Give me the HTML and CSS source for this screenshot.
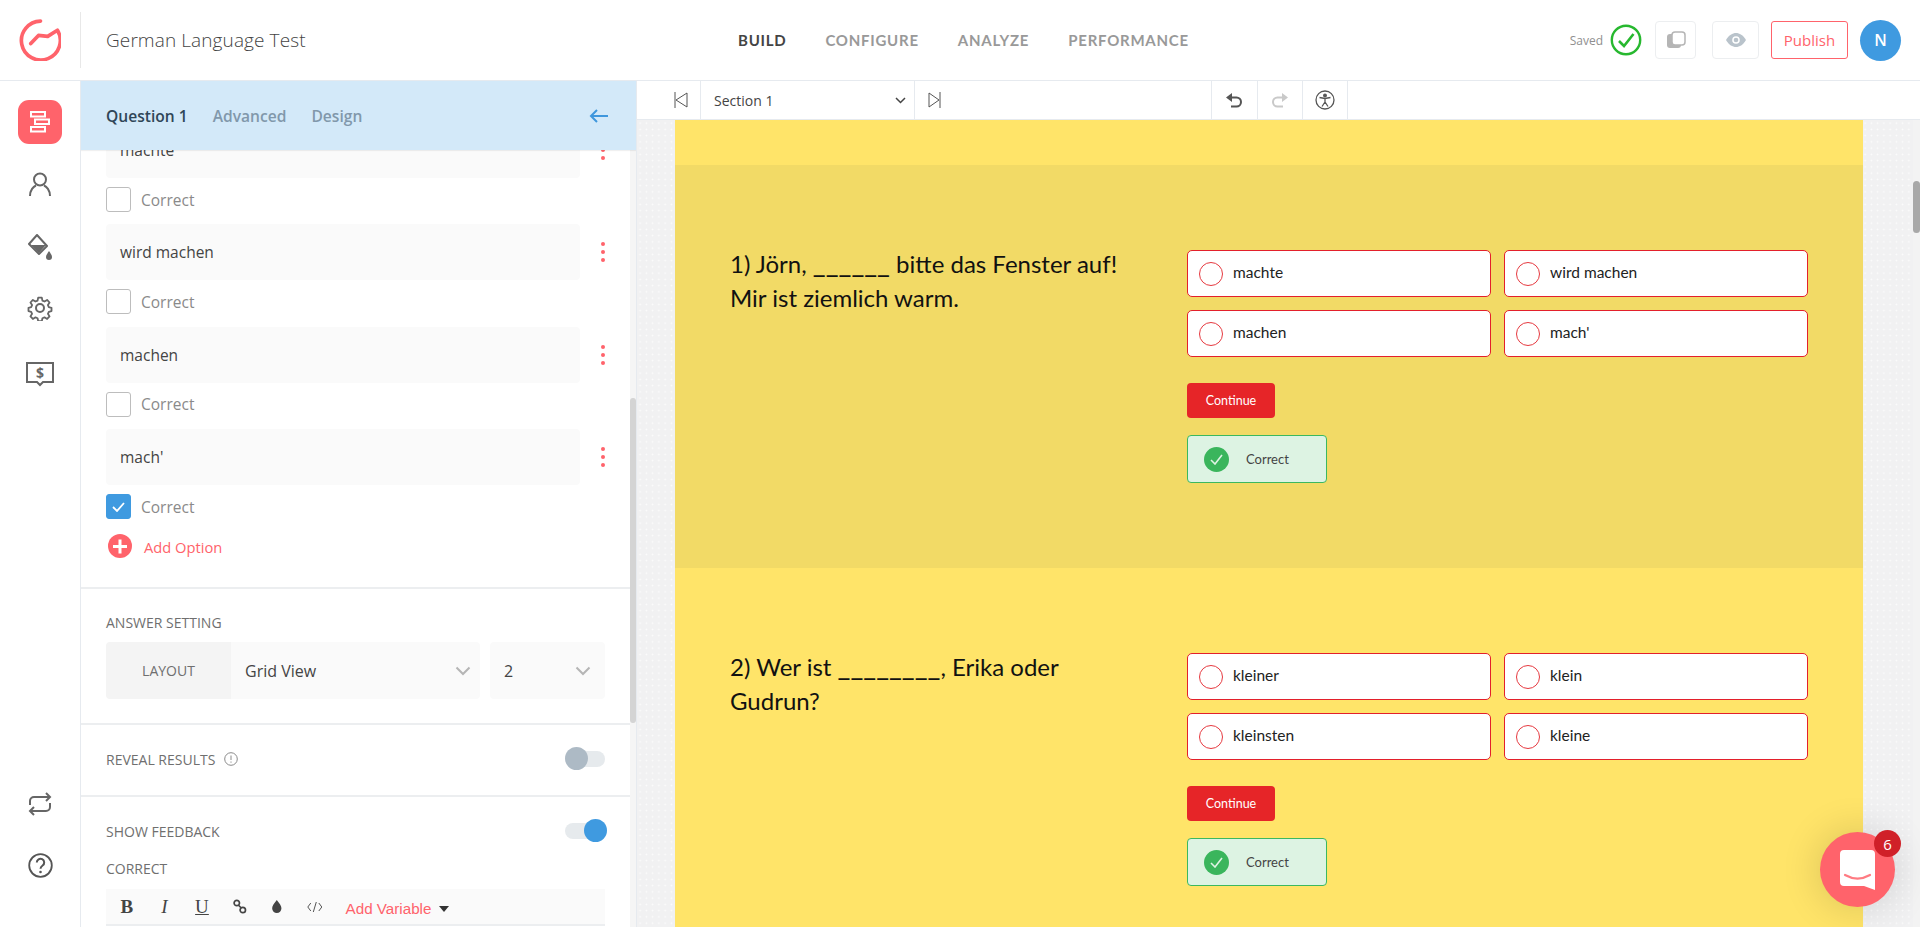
FILE: index.html
```html
<!DOCTYPE html>
<html lang="en">
<head>
<meta charset="utf-8">
<title>German Language Test</title>
<link rel="stylesheet" href="styles.css">
</head>
<body>
<header class="topbar">
  <div class="logo-cell">
    <svg class="logo" viewBox="0 0 41 41" fill="none" stroke="#ff636b" stroke-width="3.6" stroke-linecap="round" stroke-linejoin="round"><path d="M21 2A19 19 0 1 0 37.500 11L28 17 19 16 11.500 24"/></svg>
  </div>
  <div class="doc-title">German Language Test</div>
  <nav class="main-nav">
    <a class="nav-item active">BUILD</a>
    <a class="nav-item">CONFIGURE</a>
    <a class="nav-item">ANALYZE</a>
    <a class="nav-item">PERFORMANCE</a>
  </nav>
  <div class="top-actions">
    <span class="saved">Saved</span>
    <svg class="saved-check" viewBox="0 0 32 32" fill="none" stroke="#27b82f"><circle cx="16" cy="16" r="14.200" stroke-width="2.400"/><path d="M9 17l5 5L23.500 10" stroke-width="2.600"/></svg>
    <button class="icon-btn copy-btn"><svg width="20" height="18" viewBox="0 0 20 18"><rect x="1" y="3" width="14" height="14" rx="3" fill="#b5b5b5"/><rect x="6" y="1" width="13" height="13" rx="3" fill="#fff" stroke="#b5b5b5" stroke-width="1.500"/></svg></button>
    <button class="icon-btn eye-btn"><svg width="20" height="14" viewBox="0 0 20 14"><path d="M0 7C3 2 6.500 0 10 0s7 2 10 7c-3 5-6.500 7-10 7S3 12 0 7z" fill="#b9c3cb"/><circle cx="10" cy="7" r="3.800" fill="#fff"/><circle cx="10" cy="7" r="2.300" fill="#b9c3cb"/></svg></button>
    <button class="publish">Publish</button>
    <div class="avatar">N</div>
  </div>
</header>

<div class="workspace">
  <aside class="rail">
    <div class="rail-top">
      <div class="rail-active">
        <svg width="20" height="22" viewBox="0 0 20 22" fill="none" stroke="#fff" stroke-width="2"><rect x="1" y="1" width="14" height="4.500"/><rect x="5" y="8.500" width="14" height="4.500"/><rect x="1" y="16" width="14" height="4.500"/></svg>
      </div>
      <svg class="rail-icon person" width="22" height="24" viewBox="0 0 22 24" fill="none" stroke="#666" stroke-width="2"><circle cx="11" cy="7.500" r="6"/><path d="M1 24c0-6 3.500-9.500 6-10.500M21 24c0-6-3.500-9.500-6-10.500"/></svg>
      <svg class="rail-icon bucket" width="26" height="26" viewBox="0 0 26 26"><path d="M10 1l10 11-8 8-10-10z" fill="none" stroke="#666" stroke-width="2" stroke-linejoin="round"/><path d="M4 11h15l-7 8z" fill="#666"/><path d="M22 17c2 3 3 4.500 3 6a3 3 0 0 1-6 0c0-1.500 1-3 3-6z" fill="#666"/></svg>
      <svg class="rail-icon gear" width="26" height="26" viewBox="0 0 26 26" fill="none" stroke="#666" stroke-width="2" stroke-linejoin="round"><circle cx="13" cy="13" r="4"/><path d="M11 1.500h4l.7 3.300 2.300 1 2.900-1.800 2.700 2.900-1.800 2.800 1 2.300 3 .8v3.600l-3 .8-1 2.300 1.800 2.800-2.700 2.900-2.900-1.800-2.300 1-.7 3.300h-4l-.7-3.300-2.300-1-2.900 1.800-2.700-2.900 1.800-2.800-1-2.300-3-.8v-3.600l3-.8 1-2.300-1.800-2.800 2.700-2.900 2.900 1.800 2.300-1z" transform="translate(1.300 1.300) scale(.9)"/></svg>
      <div class="rail-dollar">
        <svg width="28" height="25" viewBox="0 0 28 25" fill="none" stroke="#666" stroke-width="2"><path d="M1 1h26v19H17l-3 3-3-3H1z"/></svg>
        <span class="dollar-sign">$</span>
      </div>
    </div>
    <div class="rail-bottom">
      <svg class="rail-icon" width="24" height="24" viewBox="0 0 24 24" fill="none" stroke="#666" stroke-width="2"><path d="M2 13V9a4 4 0 0 1 4-4h16M18 1l4 4-4 4M22 11v4a4 4 0 0 1-4 4H2M6 15l-4 4 4 4"/></svg>
      <svg class="rail-icon" width="25" height="25" viewBox="0 0 25 25" fill="none" stroke="#555" stroke-width="1.800"><circle cx="12.500" cy="12.500" r="11.300"/><path d="M8.800 9.500a3.700 3.700 0 1 1 5.800 3c-1.400 1-2.100 1.700-2.100 3.300" stroke-width="2"/><circle cx="12.500" cy="19" r="1.300" fill="#555" stroke="none"/></svg>
    </div>
  </aside>

  <section class="panel">
    <div class="panel-tabs">
      <span class="ptab current">Question 1</span>
      <span class="ptab">Advanced</span>
      <span class="ptab">Design</span>
      <svg class="back-arrow" width="19" height="14" viewBox="0 0 19 14" fill="none" stroke="#3f97dd" stroke-width="2"><path d="M19 7H2M8 1L2 7l6 6"/></svg>
    </div>
    <div class="panel-scroll">
      <div class="panel-content">
        <div class="block options-block">
          <div class="option-row"><div class="option-input">machte</div><span class="kebab"><i></i><i></i><i></i></span></div>
          <label class="check-row"><span class="check"></span>Correct</label>
          <div class="option-row"><div class="option-input">wird machen</div><span class="kebab"><i></i><i></i><i></i></span></div>
          <label class="check-row"><span class="check"></span>Correct</label>
          <div class="option-row"><div class="option-input">machen</div><span class="kebab"><i></i><i></i><i></i></span></div>
          <label class="check-row"><span class="check"></span>Correct</label>
          <div class="option-row"><div class="option-input">mach'</div><span class="kebab"><i></i><i></i><i></i></span></div>
          <label class="check-row"><span class="check on"><svg width="13" height="10" viewBox="0 0 13 10" fill="none" stroke="#fff" stroke-width="1.800"><path d="M1 5l4 4 7-8"/></svg></span>Correct</label>
          <div class="add-option"><span class="plus"></span><span class="add-text">Add Option</span></div>
        </div>
        <div class="block answer-block">
          <div class="caps">ANSWER SETTING</div>
          <div class="layout-row">
            <div class="layout-label">LAYOUT</div>
            <div class="layout-select"><span>Grid View</span><svg width="16" height="10" viewBox="0 0 16 10" fill="none" stroke="#b5b5b5" stroke-width="2"><path d="M1.500 1.500L8 8l6.500-6.500"/></svg></div>
            <div class="count-select"><span>2</span><svg width="16" height="10" viewBox="0 0 16 10" fill="none" stroke="#b5b5b5" stroke-width="2"><path d="M1.500 1.500L8 8l6.500-6.500"/></svg></div>
          </div>
        </div>
        <div class="block reveal-block">
          <div class="caps with-info">REVEAL RESULTS
            <svg width="14" height="14" viewBox="0 0 14 14" fill="none" stroke="#8a8a8a"><circle cx="7" cy="7" r="6.300"/><path d="M7 3.500v4.500M7 9.500v1.200"/></svg>
          </div>
          <span class="toggle"><span class="knob"></span></span>
        </div>
        <div class="block feedback-block">
          <div class="feedback-head">
            <div class="caps">SHOW FEEDBACK</div>
            <span class="toggle on"><span class="knob"></span></span>
          </div>
          <div class="caps correct-label">CORRECT</div>
          <div class="editor-bar">
            <span class="ed ed-b">B</span>
            <span class="ed ed-i">I</span>
            <span class="ed ed-u">U</span>
            <svg class="ed" width="14" height="15" viewBox="0 0 14 15" fill="none" stroke="#444" stroke-width="1.700"><circle cx="4" cy="4" r="2.700"/><circle cx="10" cy="11" r="2.700"/><path d="M5.500 6l3 3"/></svg>
            <svg class="ed" width="10" height="13" viewBox="0 0 10 14"><path d="M5 0c3 4 5 6 5 9a5 5 0 0 1-10 0c0-3 2-5 5-9z" fill="#444"/></svg>
            <svg class="ed" width="16" height="12" viewBox="0 0 16 12" fill="none" stroke="#555"><path d="M4 2L1 6l3 4M12 2l3 4-3 4M9.500 1L6.500 11"/></svg>
            <span class="add-variable">Add Variable</span><span class="caret"></span>
          </div>
        </div>
      </div>
      <div class="panel-scrollbar"><span class="panel-thumb"></span></div>
    </div>
  </section>

  <main class="stage">
    <div class="stage-tools">
      <span class="tool tool-prev"><svg width="14" height="16" viewBox="0 0 14 16" fill="none" stroke="#555"><path d="M1 0v16M13 1L2 8l11 7z"/></svg></span>
      <div class="section-select"><span>Section 1</span><svg width="11" height="7" viewBox="0 0 11 7" fill="none" stroke="#444" stroke-width="1.500"><path d="M1 1l4.500 4.500L10 1"/></svg></div>
      <span class="tool tool-next"><svg width="13" height="16" viewBox="0 0 13 16" fill="none" stroke="#555"><path d="M12 0v16M1 1l10 7-10 7z"/></svg></span>
      <span class="tool-spacer"></span>
      <span class="tool tool-square"><svg width="18" height="15" viewBox="0 0 18 15"><path d="M7 0v9L1 4.500z" fill="#555"/><path d="M6 4.500h5.500a4.500 4.500 0 0 1 0 9H6" fill="none" stroke="#555" stroke-width="2"/></svg></span>
      <span class="tool tool-square"><svg width="18" height="15" viewBox="0 0 18 15"><path d="M11 0v9l6-4.500z" fill="#c9c9c9"/><path d="M12 4.500H6.500a4.500 4.500 0 0 0 0 9H12" fill="none" stroke="#c9c9c9" stroke-width="2"/></svg></span>
      <span class="tool tool-square"><svg width="20" height="20" viewBox="0 0 20 20" fill="none" stroke="#555" stroke-width="1.300"><circle cx="10" cy="10" r="9"/><circle cx="10" cy="5.500" r="1.300" fill="#555"/><path d="M4.500 7.500L10 8.500l5.500-1M10 8.500v3.500M10 12l-3 4.500M10 12l3 4.500"/></svg></span>
    </div>
    <div class="stage-scroll">
      <div class="quiz">
        <div class="quiz-strip"></div>
        <article class="question active-q">
          <div class="q-text">1) Jörn, <span class="blank">______</span> bitte das Fenster auf! Mir ist ziemlich warm.</div>
          <div class="q-body">
            <div class="answers">
              <div class="answer"><span class="radio"></span>machte</div>
              <div class="answer"><span class="radio"></span>wird machen</div>
              <div class="answer"><span class="radio"></span>machen</div>
              <div class="answer"><span class="radio"></span>mach'</div>
            </div>
            <button class="continue">Continue</button>
            <div class="feedback"><span class="tick"><svg width="13" height="11" viewBox="0 0 13 11" fill="none" stroke="#dff3e4" stroke-width="1.600"><path d="M1 6l4 4 7-9"/></svg></span>Correct</div>
          </div>
        </article>
        <article class="question">
          <div class="q-text">2) Wer ist <span class="blank">________</span>, Erika oder Gudrun?</div>
          <div class="q-body">
            <div class="answers">
              <div class="answer"><span class="radio"></span>kleiner</div>
              <div class="answer"><span class="radio"></span>klein</div>
              <div class="answer"><span class="radio"></span>kleinsten</div>
              <div class="answer"><span class="radio"></span>kleine</div>
            </div>
            <button class="continue">Continue</button>
            <div class="feedback"><span class="tick"><svg width="13" height="11" viewBox="0 0 13 11" fill="none" stroke="#dff3e4" stroke-width="1.600"><path d="M1 6l4 4 7-9"/></svg></span>Correct</div>
          </div>
        </article>
      </div>
      <div class="stage-scrollbar"><span class="stage-thumb"></span></div>
    </div>
  </main>
</div>

<div class="chat">
  <svg width="35" height="40" viewBox="0 0 35 40"><path d="M4 0h27a4 4 0 0 1 4 4v36l-11-4H4a4 4 0 0 1-4-4V4a4 4 0 0 1 4-4z" fill="#fff"/><path d="M5 25c8 4.500 17 4.500 25 0" fill="none" stroke="#ff7b82" stroke-width="2.200" stroke-linecap="round"/></svg>
  <span class="chat-badge">6</span>
</div>
</body>
</html>
```

FILE: styles.css
```css
* { box-sizing: border-box; }
html, body { margin: 0; height: 100%; overflow: hidden; }
body { font-family: "Open Sans", "Noto Sans", sans-serif; color: #444; background: #fff; }
button { font-family: inherit; cursor: pointer; }

.topbar { height: 81px; display: flex; align-items: center; border-bottom: 1px solid #e6eaef; position: relative; background: #fff; }
.logo-cell { width: 81px; height: 56px; display: flex; align-items: center; padding-left: 19px; border-right: 1px solid #e8e8e8; }
.logo { width: 42px; height: 42px; }
.doc-title { margin-left: 25px; font-size: 19px; font-weight: 300; color: #444; letter-spacing: .1px; }
.main-nav { position: absolute; left: 738px; top: 0; height: 80px; display: flex; align-items: center; gap: 39px; font-family: Lato, sans-serif; font-size: 15px; letter-spacing: .75px; font-weight: 700; color: #999; }
.nav-item.active { color: #444; }
.top-actions { margin-left: auto; display: flex; align-items: center; padding-right: 19px; }
.saved { font-size: 12px; color: #8f8f8f; margin-right: 7px; }
.saved-check { width: 32px; height: 32px; margin-right: 13px; }
.icon-btn { height: 38px; background: #fff; border: 1px solid #eceef0; border-radius: 4px; display: flex; align-items: center; justify-content: center; padding: 0; }
.copy-btn { width: 41px; margin-right: 16px; }
.eye-btn { width: 47px; margin-right: 12px; }
.publish { width: 77px; height: 38px; background: #fff; border: 1px solid #ff636b; border-radius: 3px; color: #ff636b; font-size: 15px; padding: 0; }
.avatar { width: 41px; height: 41px; margin-left: 12px; border-radius: 50%; background: #3f9ae0; color: #fff; display: flex; align-items: center; justify-content: center; font-size: 16px; font-weight: 600; }

.workspace { display: flex; height: 846px; }
.rail { width: 81px; flex: none; border-right: 1px solid #e6eaef; display: flex; flex-direction: column; justify-content: space-between; align-items: center; padding: 19px 0 49px; }
.rail-top { display: flex; flex-direction: column; align-items: center; }
.rail-active { width: 44px; height: 44px; background: #ff636b; border-radius: 11px; display: flex; align-items: center; justify-content: center; }
.rail-icon { display: block; }
.person { margin-top: 28px; }
.bucket { margin-top: 38px; }
.gear { margin-top: 35px; }
.rail-dollar { margin-top: 41px; position: relative; width: 28px; height: 25px; }
.rail-dollar svg { display: block; }
.dollar-sign { position: absolute; inset: 0 0 5px; display: flex; align-items: center; justify-content: center; font-size: 14px; font-weight: 700; color: #666; }
.rail-bottom { display: flex; flex-direction: column; align-items: center; gap: 37px; }

.panel { width: 556px; flex: none; display: flex; flex-direction: column; overflow: hidden; position: relative; border-right: 1px solid #e6eaef; }
.panel-tabs { height: 69px; flex: none; background: #d3e9f9; display: flex; align-items: center; padding: 0 28px 0 25px; gap: 25px; font-size: 15.600px; font-weight: 600; color: #8198ab; position: relative; z-index: 2; box-shadow: 0 1px 1px rgba(0,0,0,.06); }
.ptab.current { color: #2f4658; }
.back-arrow { margin-left: auto; }
.panel-scroll { flex: 1; position: relative; overflow: hidden; }
.panel-content { width: 549px; margin-top: -28px; }
.block { border-bottom: 2px solid #eceef0; padding: 0 25px; }
.options-block { height: 467px; }
.option-row { display: flex; align-items: center; }
.option-input { width: 474px; height: 56px; background: #fafafa; border-radius: 4px; display: flex; align-items: center; padding-left: 14px; font-size: 15.500px; color: #444; }
.kebab { margin-left: 21px; display: flex; flex-direction: column; gap: 4px; }
.kebab i { width: 4px; height: 4px; border-radius: 50%; background: #ff636b; }
.check-row { height: 25px; margin: 9px 0 12.400px; display: flex; align-items: center; font-size: 15.500px; color: #8a8a8a; }
.check { width: 25px; height: 25px; margin-right: 10px; background: #fff; border: 1px solid #bdbdbd; border-radius: 3px; display: flex; align-items: center; justify-content: center; }
.check.on { background: #3f9ae0; border-color: #3f9ae0; }
.add-option { display: flex; align-items: center; margin: 15px 0 0 2px; font-size: 14.700px; color: #ff636b; height: 24px; }
.add-text { padding-top: 1px; }
.plus { width: 24px; height: 24px; margin-right: 12px; border-radius: 50%; background: #ff636b; position: relative; }
.plus::before, .plus::after { content: ""; position: absolute; left: 5px; top: 10.500px; width: 14px; height: 3px; background: #fff; }
.plus::after { transform: rotate(90deg); }
.caps { font-size: 14px; color: #6f6f6f; }
.answer-block { height: 136px; padding-top: 24px; }
.layout-row { display: flex; margin-top: 10px; height: 57px; font-size: 16px; }
.layout-label { width: 125px; background: #f4f4f4; border-radius: 4px 0 0 4px; display: flex; align-items: center; justify-content: center; font-size: 14px; color: #6f6f6f; }
.layout-select, .count-select { background: #fafafa; display: flex; align-items: center; justify-content: space-between; color: #444; padding: 0 14px; }
.layout-select { width: 249px; border-radius: 0 4px 4px 0; margin-right: 10px; padding-right: 9px; }
.count-select { width: 115px; border-radius: 4px; }
.reveal-block { height: 72px; display: flex; align-items: center; justify-content: space-between; padding-bottom: 2px; }
.with-info { display: flex; align-items: center; gap: 9px; }
.toggle { width: 40px; height: 16px; background: #e6eaed; border-radius: 8px; position: relative; display: block; }
.knob { position: absolute; left: 0; top: -4px; width: 23px; height: 23px; border-radius: 50%; background: #adbac5; }
.toggle.on .knob { left: 19px; background: #3f9ae0; }
.feedback-block { border-bottom: 0; padding-top: 25px; }
.feedback-head { display: flex; align-items: center; justify-content: space-between; height: 18px; }
.correct-label { margin-top: 19px; }
.editor-bar { margin-top: 11px; height: 37px; width: 499px; background: #fafafa; border-bottom: 2px solid #eceef0; position: relative; display: flex; align-items: center; padding-left: 2px; }
.ed { width: 37.600px; text-align: center; color: #444; font-family: "Liberation Serif", serif; font-size: 19px; flex: none; }
.ed-b { font-weight: 700; }
.ed-i { font-style: italic; }
.ed-u { text-decoration: underline; }
.add-variable { color: #ff636b; font-family: "Liberation Sans", sans-serif; font-size: 15.200px; margin: 4px 0 0 12px; }
.caret { width: 0; height: 0; margin: 4px 0 0 8px; border: 5px solid transparent; border-top: 6px solid #333; border-bottom: 0; }
.panel-scrollbar { position: absolute; top: 0; right: 0; bottom: 0; width: 6px; background: #f5f5f5; }
.panel-thumb { position: absolute; top: 248px; left: 0; width: 6px; height: 325px; background: #d4d4d4; border-radius: 3px; }

.stage { flex: 1; min-width: 0; display: flex; flex-direction: column; }
.stage-tools { height: 39px; flex: none; display: flex; align-items: center; background: #fff; border-bottom: 1px solid #e6eaef; padding-left: 37px; }
.tool { display: flex; align-items: center; justify-content: center; height: 38px; }
.tool-prev { width: 26px; justify-content: flex-start; }
.section-select { width: 215px; height: 38px; border: solid #e6eaef; border-width: 0 1px; display: flex; align-items: center; justify-content: space-between; padding: 0 8px 0 13px; font-size: 14px; color: #444; }
.tool-next { width: 39px; }
.tool-spacer { width: 257px; height: 38px; }
.tool-square { width: 45.500px; border-left: 1px solid #e6eaef; }
.tool-square:last-child { border-right: 1px solid #e6eaef; }
.stage-scroll { flex: 1; position: relative; overflow: hidden; background-color: #f1f1f2; background-image: radial-gradient(circle, rgba(255,255,255,.85) .7px, transparent 1px); background-size: 6.250px 6.250px; padding-left: 38px; }
.quiz { width: 1188px; background: #ffe469; font-family: Lato, sans-serif; color: #111; }
.quiz-strip { height: 45px; }
.question { height: 403px; padding: 82px 55px 0; display: flex; }
.active-q { background: #f2da66; }
.q-text { width: 457px; padding-right: 60px; font-size: 24px; line-height: 34px; }
.blank { font-size: 28px; line-height: 1; }
.q-body { width: 621px; padding-top: 3px; }
.answers { display: grid; grid-template-columns: 304px 304px; gap: 13px; }
.answer { height: 47px; background: #fff; border: 1px solid #e3202b; border-radius: 5px; display: flex; align-items: center; padding: 0 0 3px 11px; font-size: 15.500px; color: #222; }
.radio { width: 24px; height: 24px; margin: 3px 10px 0 0; border: 1px solid #e6393f; border-radius: 50%; }
.continue { display: block; margin-top: 26px; width: 88px; height: 35px; background: #e62528; border: 0; border-radius: 4px; color: #fff; font-family: Lato, sans-serif; font-size: 12.500px; font-weight: 400; padding: 0; }
.feedback { margin-top: 17px; width: 140px; height: 48px; background: #ddf3e3; border: 1px solid #3cb85f; border-radius: 4px; display: flex; align-items: center; padding-left: 16px; font-size: 13px; color: #444; }
.tick { width: 25px; height: 25px; margin-right: 17px; border-radius: 50%; background: #3ab55c; display: flex; align-items: center; justify-content: center; }
.stage-scrollbar { position: absolute; top: 0; right: 0; bottom: 0; width: 7px; background: #f3f3f3; }
.stage-thumb { position: absolute; top: 61px; left: 0; width: 7px; height: 52px; background: #a8a8a8; border-radius: 4px; }

.chat { position: absolute; left: 1820px; top: 832px; width: 75px; height: 75px; border-radius: 50%; background: #ff636b; box-shadow: 0 0 40px rgba(0,0,0,.16); display: flex; align-items: center; justify-content: center; }
.chat-badge { position: absolute; top: -2px; right: -6px; width: 27px; height: 27px; border-radius: 50%; background: #d02028; color: #fff; display: flex; align-items: center; justify-content: center; font-size: 15px; }
```
